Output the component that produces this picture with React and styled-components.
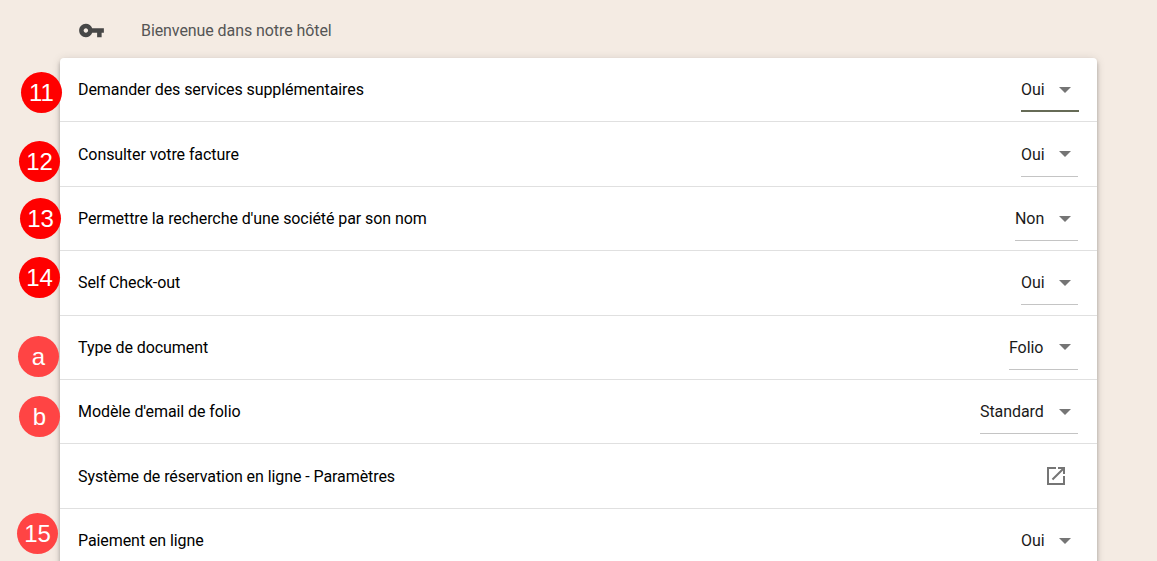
import React from 'react'
import styled, { createGlobalStyle } from 'styled-components'

const GlobalStyle = createGlobalStyle`
    html, body {
        margin: 0;
        height: 100%;
        overflow: hidden;
        background: #f4ebe3;
        font-family: Roboto, "Noto Sans", sans-serif;
    }
`

const Page = styled.div`
    padding: 0 60px;
    width: 1037px;
`

const Header = styled.header`
    display: flex;
    align-items: center;
    height: 58px;
    padding: 0 18px;
    color: #555;
    font-size: 16px;
    letter-spacing: -0.08px;
`

const KeyIcon = styled.svg`
    width: 27px;
    height: 27px;
    margin-right: 36px;
    margin-top: 2px;
    fill: #474747;
`

const Title = styled.span`
    margin-top: 2px;
`

const Card = styled.section`
    background: #fff;
    border-radius: 4px 4px 0 0;
    box-shadow: 0 2px 4px -1px rgba(0, 0, 0, .2), 0 4px 5px rgba(0, 0, 0, .14), 0 1px 10px rgba(0, 0, 0, .12);
`

const Row = styled.div`
    position: relative;
    display: flex;
    align-items: center;
    justify-content: space-between;
    box-sizing: border-box;
    height: 64.4px;
    padding: 0 18px;
    border-bottom: 1px solid #e0e0e0;
    color: #000;
    font-size: 16px;
    letter-spacing: -0.08px;
`

const Badge = styled.span`
    position: absolute;
    left: ${p => p.$x - 60}px;
    top: ${p => p.$y}px;
    width: 41px;
    height: 41px;
    border-radius: 50%;
    background: ${p => p.$soft ? '#ff4444' : '#ff0000'};
    color: #fff;
    font-family: "Liberation Sans", Arial, sans-serif;
    font-size: 24px;
    letter-spacing: 0;
    line-height: 41px;
    text-align: center;
`

const Select = styled.div`
    display: flex;
    align-items: center;
    box-sizing: border-box;
    height: ${p => p.$focused ? 44 : 45}px;
    width: ${p => p.$width}px;
    margin-right: ${p => p.$focused ? 0 : 1}px;
    padding-top: ${p => p.$focused ? 1 : 1.2}px;
    border-bottom: ${p => p.$focused ? '2px solid #666b56' : '1px solid #c4c4c4'};
    color: #1a1a1a;
`

const SelectValue = styled.span`
    flex: 1;
`

const Caret = styled.i`
    width: 0;
    height: 0;
    margin-top: ${p => p.$focused ? 2 : 0}px;
    margin-right: ${p => p.$focused ? 8 : 7}px;
    border-left: 6px solid transparent;
    border-right: 6px solid transparent;
    border-top: 6px solid #757575;
`

const LinkIcon = styled.svg`
    width: 24px;
    height: 24px;
    margin-right: 11px;
    margin-top: -1px;
    fill: #757575;
`

const rows = [
    { label: 'Demander des services supplémentaires', value: 'Oui', width: 58, focused: true, badge: { text: '11', x: 21, y: 14 } },
    { label: 'Consulter votre facture', value: 'Oui', width: 57, badge: { text: '12', x: 19, y: 19 } },
    { label: "Permettre la recherche d'une société par son nom", value: 'Non', width: 63, badge: { text: '13', x: 20, y: 11 } },
    { label: 'Self Check-out', value: 'Oui', width: 57, badge: { text: '14', x: 19, y: 6 } },
    { label: 'Type de document', value: 'Folio', width: 69, badge: { text: 'a', x: 18, y: 20, soft: true } },
    { label: "Modèle d'email de folio", value: 'Standard', width: 98, badge: { text: 'b', x: 19, y: 16, soft: true } },
    { label: 'Système de réservation en ligne - Paramètres', link: true },
    { label: 'Paiement en ligne', value: 'Oui', width: 57, badge: { text: '15', x: 17, y: 4, soft: true } },
]

export default function App() {
    return (
        <Page>
            <GlobalStyle />
            <Header>
                <KeyIcon viewBox="0 0 24 24">
                    <path d="M12.65 10C11.83 7.67 9.61 6 7 6c-3.31 0-6 2.69-6 6s2.69 6 6 6c2.61 0 4.83-1.67 5.65-4H17v4h4v-4h2v-4H12.65zM7 14c-1.1 0-2-.9-2-2s.9-2 2-2 2 .9 2 2-.9 2-2 2z" />
                </KeyIcon>
                <Title>Bienvenue dans notre hôtel</Title>
            </Header>
            <Card>
                {rows.map(row => (
                    <Row key={row.label}>
                        {row.badge && (
                            <Badge $x={row.badge.x} $y={row.badge.y} $soft={row.badge.soft}>
                                {row.badge.text}
                            </Badge>
                        )}
                        <span>{row.label}</span>
                        {row.link ? (
                            <LinkIcon viewBox="0 0 24 24">
                                <path d="M19 19H5V5h7V3H3v18h18v-9h-2v7zM14 3v2h3.59l-9.83 9.83 1.41 1.41L19 6.41V10h2V3h-7z" />
                            </LinkIcon>
                        ) : (
                            <Select $width={row.width} $focused={row.focused}>
                                <SelectValue>{row.value}</SelectValue>
                                <Caret $focused={row.focused} />
                            </Select>
                        )}
                    </Row>
                ))}
            </Card>
        </Page>
    )
}
